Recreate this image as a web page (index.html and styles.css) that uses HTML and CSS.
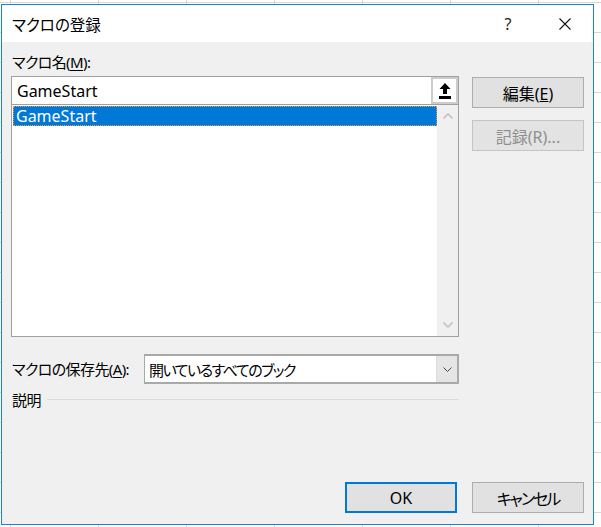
FILE: index.html
```html
<!DOCTYPE html>
<html lang="ja">
<head>
<meta charset="utf-8">
<title>マクロの登録</title>
<link rel="stylesheet" href="styles.css">
</head>
<body>
<div class="dialog">
  <div class="titlebar">
    <span class="title">マクロの登録</span>
    <span class="help">?</span>
    <span class="close">
      <svg width="12" height="12" viewBox="0 0 12 12"><path d="M0.5 0.5 L11.5 11.5 M11.5 0.5 L0.5 11.5" stroke="#111" stroke-width="1.1" fill="none"/></svg>
    </span>
  </div>
  <div class="content">
    <div class="label name-label">マクロ名(<u>M</u>):</div>
    <div class="main">
      <div class="left">
        <div class="textbox">
          <span class="tb-text">GameStart</span>
          <span class="refbtn">
            <svg width="12" height="16" viewBox="0 0 12 16"><polygon points="6,0 11.5,6 8,6 8,11 4,11 4,6 0.5,6" fill="#000"/><rect x="0" y="13" width="12" height="3" fill="#000"/></svg>
          </span>
        </div>
        <div class="listbox">
          <div class="items">
            <div class="item selected">GameStart</div>
          </div>
          <div class="scrollbar">
            <svg class="chev" width="10" height="6" viewBox="0 0 10 6"><path d="M0.5 5.5 L5 1 L9.5 5.5" stroke="#c2c2c2" stroke-width="1.6" fill="none"/></svg>
            <svg class="chev" width="10" height="6" viewBox="0 0 10 6"><path d="M0.5 0.5 L5 5 L9.5 0.5" stroke="#c2c2c2" stroke-width="1.6" fill="none"/></svg>
          </div>
        </div>
      </div>
      <div class="right">
        <button class="btn">編集(<u>E</u>)</button>
        <button class="btn" disabled>記録(R)...</button>
      </div>
    </div>
    <div class="store-row">
      <span class="label">マクロの保存先(<u>A</u>):</span>
      <div class="combo">
        <span class="combo-text">開いているすべてのブック</span>
        <span class="drop">
          <svg width="9" height="5" viewBox="0 0 9 5"><path d="M0.5 0.5 L4.5 4.5 L8.5 0.5" stroke="#444" stroke-width="1" fill="none"/></svg>
        </span>
      </div>
    </div>
    <div class="desc">
      <span class="label">説明</span>
      <span class="rule"></span>
    </div>
    <div class="footer">
      <button class="btn ok">OK</button>
      <button class="btn btn-kana">キャンセル</button>
    </div>
  </div>
</div>
</body>
</html>
```
FILE: styles.css
```css
html, body {
  margin: 0;
  padding: 0;
}
body {
  width: 601px;
  height: 527px;
  overflow: hidden;
  background-color: #ffffff;
  background-image:
    linear-gradient(to right, #d6d6d6 1px, transparent 1px),
    linear-gradient(to bottom, #d6d6d6 1px, transparent 1px);
  background-size: 88px 30px, 88px 30px;
  background-position: 10px 2px, 10px 2px;
  font-family: "Noto Sans", "Noto Sans CJK JP", sans-serif;
  font-feature-settings: "palt";
  color: #000;
}
.dialog {
  box-sizing: border-box;
  margin: 4px 0 0 1px;
  width: 593px;
  height: 521px;
  border: 1px solid #1883d7;
  background: #f0f0f0;
  display: flex;
  flex-direction: column;
}
.titlebar {
  height: 37px;
  background: #ffffff;
  display: flex;
  align-items: center;
  padding-left: 10px;
}
.title {
  flex: 1;
  font-size: 15.5px;
  padding-top: 1px;
}
.help {
  width: 24px;
  text-align: center;
  font-size: 16px;
  color: #222;
  margin-right: 22px;
}
.close {
  width: 46px;
  display: flex;
  justify-content: center;
  align-items: center;
  margin-right: 5px;
}
.close svg { display: block; }
.content {
  flex: 1;
  display: flex;
  flex-direction: column;
  padding: 10px 9px 11px 9px;
}
.label {
  font-size: 15px;
  letter-spacing: -0.6px;
  line-height: 20px;
  padding-left: 1px;
}
.label u { text-underline-offset: 2px; }
.name-label {
  margin-bottom: 4px;
}
.main {
  display: flex;
  gap: 13px;
}
.left {
  width: 448px;
  display: flex;
  flex-direction: column;
}
.textbox {
  box-sizing: border-box;
  height: 29px;
  border: 1px solid #a0a0a0;
  background: #fff;
  display: flex;
  align-items: center;
}
.tb-text {
  flex: 1;
  font-size: 16px;
  padding-left: 5px;
  padding-top: 1px;
}
.refbtn {
  box-sizing: border-box;
  width: 27px;
  height: 27px;
  border: 2px solid #cccccc;
  background: #fff;
  display: flex;
  justify-content: center;
  align-items: center;
}
.refbtn svg { display: block; margin-top: 1px; }
.listbox {
  box-sizing: border-box;
  height: 232px;
  border: 1px solid #a0a0a0;
  border-top: none;
  background: #fff;
  display: flex;
}
.items {
  flex: 1;
  padding: 1px 0 1px 1px;
}
.item {
  box-sizing: border-box;
  height: 20px;
  line-height: 19px;
  font-size: 16px;
  padding-left: 3px;
  padding-top: 1px;
}
.item.selected {
  background: #0078d7;
  color: #fff;
  outline: 1px dotted #f29a3a;
  outline-offset: -1px;
}
.scrollbar {
  width: 21px;
  background: #f0f0f0;
  display: flex;
  flex-direction: column;
  justify-content: space-between;
  align-items: center;
  padding: 8px 0 8px 0;
}
.chev { display: block; }
.right {
  width: 112px;
  display: flex;
  flex-direction: column;
  gap: 12px;
  padding-top: 1px;
}
.btn {
  box-sizing: border-box;
  width: 112px;
  height: 31px;
  border: 1px solid #adadad;
  background: #e1e1e1;
  font-family: "Noto Sans", "Noto Sans CJK JP", sans-serif;
  font-feature-settings: "palt";
  font-size: 16px;
  color: #000;
  padding: 0;
  margin: 0;
}
.btn-kana {
  letter-spacing: -2px;
}
.btn:disabled {
  color: #8f8f8f;
  border-color: #c4c4c4;
  background: #e3e3e3;
}
.btn.ok {
  border: 2px solid #0078d7;
}
.store-row {
  width: 448px;
  margin-top: 17px;
  display: flex;
  justify-content: space-between;
  align-items: center;
}
.combo {
  box-sizing: border-box;
  width: 315px;
  height: 30px;
  border: 2px solid #a9a9a9;
  border-left-width: 1px;
  background: #fff;
  display: flex;
  align-items: center;
}
.combo-text {
  flex: 1;
  font-size: 15px;
  letter-spacing: -1.5px;
  padding-left: 4px;
}
.drop {
  width: 20px;
  height: 100%;
  background: #e5e5e5;
  border-left: 1px solid #dcdcdc;
  display: flex;
  justify-content: center;
  align-items: center;
}
.drop svg { display: block; }
.desc {
  width: 448px;
  margin-top: 6px;
  display: flex;
  align-items: center;
  gap: 6px;
}
.rule {
  flex: 1;
  height: 1px;
  background: #dcdcdc;
  margin-top: -2px;
}
.footer {
  margin-top: auto;
  display: flex;
  justify-content: flex-end;
  gap: 15px;
}
```
